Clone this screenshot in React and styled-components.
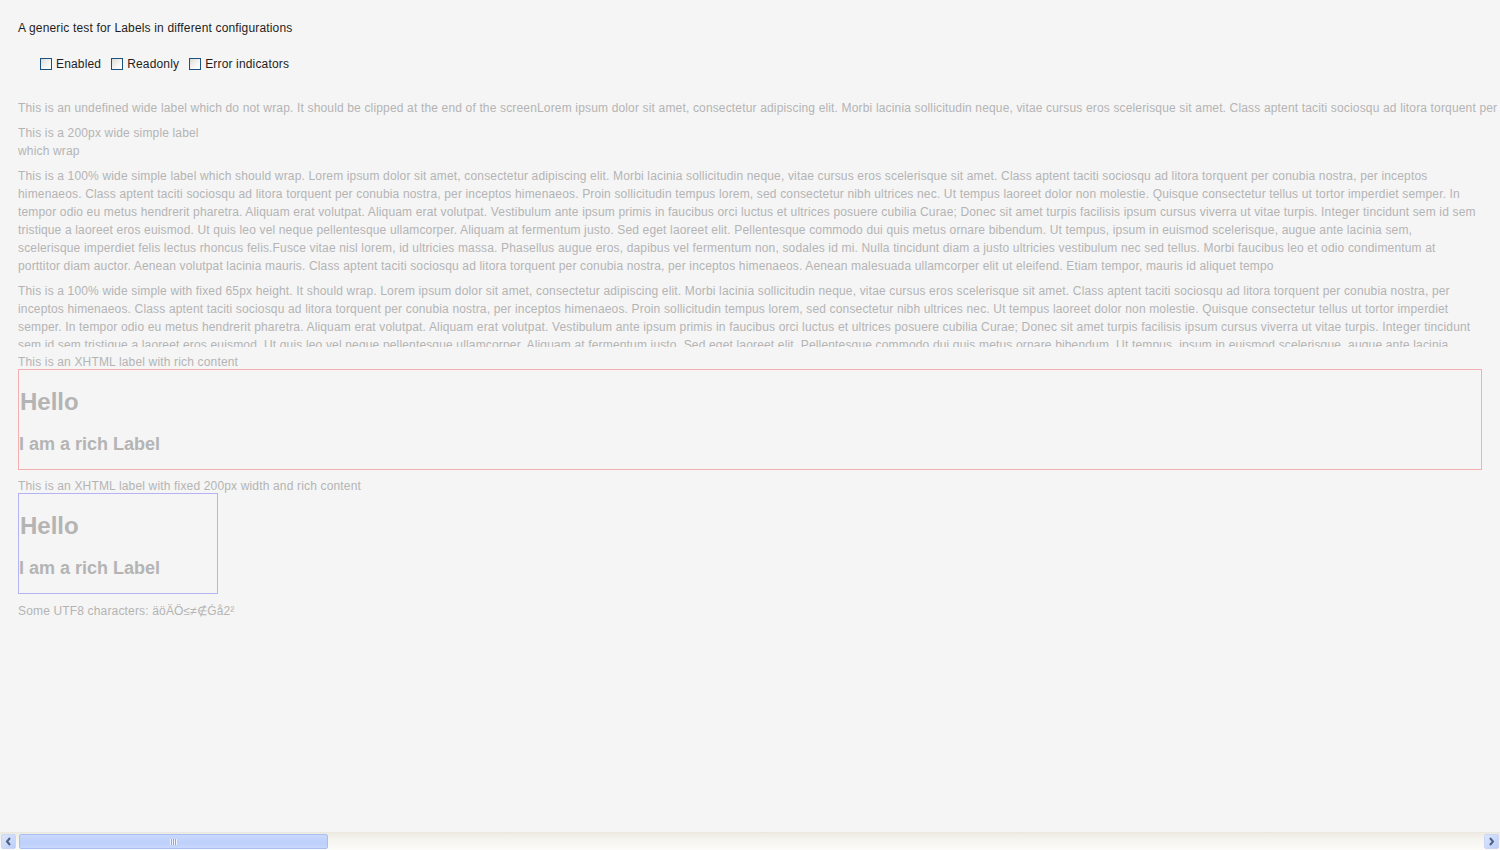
import React from 'react';
import styled, { createGlobalStyle } from 'styled-components';

const GlobalStyle = createGlobalStyle`
	html, body {
		margin: 0;
		padding: 0;
		background: #f5f5f5;
		font-family: "Liberation Sans", Arial, sans-serif;
		font-size: 12px;
		letter-spacing: 0.16px;
	}
`;

const LOREM =
	'Lorem ipsum dolor sit amet, consectetur adipiscing elit. Morbi lacinia sollicitudin neque, vitae cursus eros scelerisque sit amet. Class aptent taciti sociosqu ad litora torquent per conubia nostra, per inceptos himenaeos. Class aptent taciti sociosqu ad litora torquent per conubia nostra, per inceptos himenaeos. Proin sollicitudin tempus lorem, sed consectetur nibh ultrices nec. Ut tempus laoreet dolor non molestie. Quisque consectetur tellus ut tortor imperdiet semper. In tempor odio eu metus hendrerit pharetra. Aliquam erat volutpat. Aliquam erat volutpat. Vestibulum ante ipsum primis in faucibus orci luctus et ultrices posuere cubilia Curae; Donec sit amet turpis facilisis ipsum cursus viverra ut vitae turpis. Integer tincidunt sem id sem tristique a laoreet eros euismod. Ut quis leo vel neque pellentesque ullamcorper. Aliquam at fermentum justo. Sed eget laoreet elit. Pellentesque commodo dui quis metus ornare bibendum. Ut tempus, ipsum in euismod scelerisque, augue ante lacinia sem, scelerisque imperdiet felis lectus rhoncus felis.Fusce vitae nisl lorem, id ultricies massa. Phasellus augue eros, dapibus vel fermentum non, sodales id mi. Nulla tincidunt diam a justo ultricies vestibulum nec sed tellus. Morbi faucibus leo et odio condimentum at porttitor diam auctor. Aenean volutpat lacinia mauris. Class aptent taciti sociosqu ad litora torquent per conubia nostra, per inceptos himenaeos. Aenean malesuada ullamcorper elit ut eleifend. Etiam tempor, mauris id aliquet tempo';

const Page = styled.div`
	display: flex;
	flex-direction: column;
	height: 100vh;
	overflow: hidden;
`;

const Content = styled.div`
	flex: 1;
	padding: 19px 18px 0 18px;
	overflow: hidden;
`;

const Title = styled.div`
	color: #1e1e1e;
	line-height: 18px;
`;

const Options = styled.div`
	display: flex;
	align-items: center;
	gap: 10px;
	margin: 18px 0 0 22px;
	height: 18px;
`;

const Option = styled.label`
	display: flex;
	align-items: center;
	gap: 4px;
	color: #1e1e1e;
`;

const Box = styled.span`
	width: 10px;
	height: 10px;
	border: 1px solid #1c5180;
	background: linear-gradient(135deg, #dcdcd6 0%, #f6f6f4 60%, #ffffff 100%);
`;

const Labels = styled.div`
	display: flex;
	flex-direction: column;
	margin-top: 26px;
`;

const Label = styled.div`
	color: #b4b4b4;
	line-height: 18px;
	width: ${(p) => p.width || 'auto'};
	height: ${(p) => p.height || 'auto'};
	overflow: hidden;
	white-space: ${(p) => (p.nowrap ? 'nowrap' : 'normal')};
	margin-right: ${(p) => (p.nowrap ? '-18px' : '6px')};
	margin-top: ${(p) => p.gap || '7px'};
	&:first-child {
		margin-top: 0;
	}
`;

const Rich = styled.div`
	box-sizing: border-box;
	height: 101px;
	margin-top: -2px;
	width: ${(p) => p.width || '100%'};
	border: 1px solid ${(p) => p.accent};
	color: #b4b4b4;
	font-weight: bold;
	letter-spacing: 0;
	overflow: hidden;
	white-space: nowrap;
`;

const Hello = styled.div`
	font-size: 24px;
	line-height: 28px;
	margin: 18px 0 0 1px;
`;

const Sub = styled.div`
	font-size: 18px;
	line-height: 22px;
	margin-top: 17px;
`;

const ScrollBar = styled.div`
	display: flex;
	align-items: stretch;
	height: 17px;
	flex-shrink: 0;
	background: linear-gradient(#eeebe4, #f6f4ef 40%, #fcfbf9);
	border-top: 1px solid #ebe8e0;
`;

const Arrow = styled.div`
	width: 15px;
	box-sizing: border-box;
	border: 1px solid #c9d6f5;
	border-radius: 2px;
	background: linear-gradient(135deg, #dde6fd, #bccdf8);
	display: flex;
	align-items: center;
	justify-content: center;
	margin: 1px;
`;

const Track = styled.div`
	flex: 1;
	display: flex;
	padding: 1px 0;
`;

const Thumb = styled.div`
	width: 309px;
	box-sizing: border-box;
	border: 1px solid #a9bff2;
	border-radius: 2px;
	background: linear-gradient(#cad9fd, #bcd0fb 60%, #c8d8fc);
	display: flex;
	align-items: center;
	justify-content: center;
	margin-left: 2px;
`;

const Grip = styled.div`
	width: 7px;
	height: 6px;
	background: repeating-linear-gradient(90deg, #eef3ff 0 1px, #8ea8e0 1px 2px);
`;

const Chevron = ({ dir }) => (
	<svg width="9" height="9" viewBox="0 0 9 9">
		<path
			d={dir === 'left' ? 'M6 1 L3 4.5 L6 8' : 'M3 1 L6 4.5 L3 8'}
			fill="none"
			stroke="#4d6185"
			strokeWidth="2"
		/>
	</svg>
);

const App = () => (
	<Page>
		<GlobalStyle />
		<Content>
			<Title>A generic test for Labels in different configurations</Title>
			<Options>
				<Option>
					<Box />
					Enabled
				</Option>
				<Option>
					<Box />
					Readonly
				</Option>
				<Option>
					<Box />
					Error indicators
				</Option>
			</Options>
			<Labels>
				<Label nowrap>
					This is an undefined wide label which do not wrap. It should be clipped at the end of the screen
					{LOREM}
				</Label>
				<Label width="200px">This is a 200px wide simple label which wrap</Label>
				<Label>This is a 100% wide simple label which should wrap. {LOREM}</Label>
				<Label height="65px">This is a 100% wide simple with fixed 65px height. It should wrap. {LOREM}</Label>
				<Label gap="6px">This is an XHTML label with rich content</Label>
				<Rich accent="#f4b0b0">
					<Hello>Hello</Hello>
					<Sub>I am a rich Label</Sub>
				</Rich>
				<Label gap="7px">This is an XHTML label with fixed 200px width and rich content</Label>
				<Rich accent="#b4b4f4" width="200px">
					<Hello>Hello</Hello>
					<Sub>I am a rich Label</Sub>
				</Rich>
				<Label gap="8px">Some UTF8 characters: äöÄÖ≤≠∉Ġå2²</Label>
			</Labels>
		</Content>
		<ScrollBar>
			<Arrow>
				<Chevron dir="left" />
			</Arrow>
			<Track>
				<Thumb>
					<Grip />
				</Thumb>
			</Track>
			<Arrow>
				<Chevron dir="right" />
			</Arrow>
		</ScrollBar>
	</Page>
);

export default App;
